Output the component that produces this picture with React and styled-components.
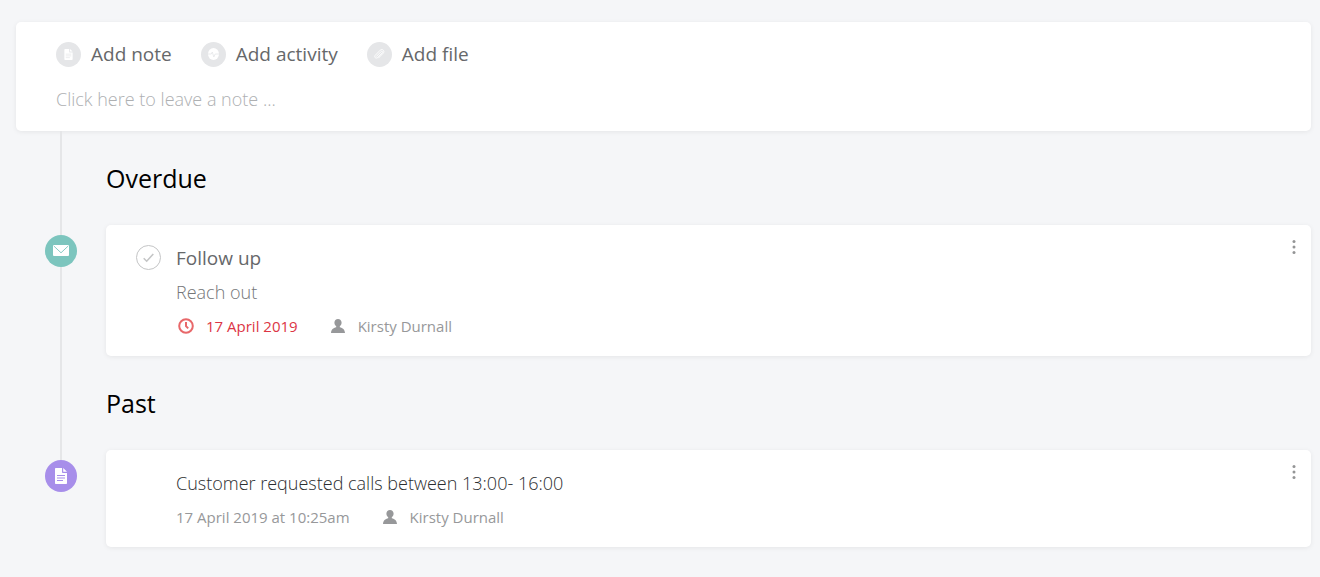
import React from 'react';
import styled, { createGlobalStyle } from 'styled-components';

const GlobalStyle = createGlobalStyle`
    * {
        box-sizing: border-box;
    }
    body {
        margin: 0;
        background-color: #f5f6f8;
        font-family: "Open Sans", "Noto Sans", sans-serif;
        color: #5c5e60;
    }
    button, input {
        font-family: inherit;
        color: inherit;
    }
    svg {
        display: block;
    }
`;

const Page = styled.main`
    padding: 22px 9px 30px 16px;
`;

const Card = styled.div`
    background-color: #fff;
    border-radius: 5px;
    box-shadow: 0 1px 5px rgba(0, 0, 0, 0.07);
`;

const Composer = styled(Card)`
    padding: 18px 40px;
`;

const Actions = styled.div`
    display: flex;
    gap: 29px;
`;

const Action = styled.button`
    display: flex;
    align-items: center;
    gap: 10px;
    padding: 0;
    border: 0;
    background: none;
    font-size: 19px;
    line-height: 28px;
    color: #66686a;
    cursor: pointer;
`;

const ActionIcon = styled.span`
    display: flex;
    align-items: center;
    justify-content: center;
    width: 25px;
    height: 25px;
    border-radius: 50%;
    background-color: #e5e6e8;
    color: #fff;
`;

const NoteInput = styled.input`
    display: block;
    width: 100%;
    height: 28px;
    margin-top: 17px;
    padding: 0;
    border: 0;
    outline: 0;
    background: none;
    font-size: 18px;
    font-weight: 300;

    &::placeholder {
        color: #aeb0b2;
        opacity: 1;
    }
`;

const Row = styled.div`
    display: grid;
    grid-template-columns: 90px 1fr;
`;

const Rail = styled.div`
    display: flex;
    flex-direction: column;
    align-items: center;
`;

const Line = styled.div`
    width: 2px;
    height: ${props => props.$short ? '10px' : 'auto'};
    flex: ${props => props.$short ? 'none' : '1'};
    background-color: #e5e6e8;
`;

const Badge = styled.div`
    display: flex;
    align-items: center;
    justify-content: center;
    width: 32px;
    height: 32px;
    border-radius: 50%;
    background-color: ${props => props.$color};
    color: #fff;
`;

const Heading = styled.h2`
    margin: 0;
    padding: 30px 0;
    font-size: 25px;
    line-height: 34px;
    font-weight: 400;
    color: #000;
`;

const EntryCard = styled(Card)`
    display: grid;
    grid-template-columns: 40px 1fr auto;
    padding: 18px 10px 15px 30px;
`;

const Check = styled.button`
    display: flex;
    align-items: center;
    justify-content: center;
    width: 25px;
    height: 25px;
    margin-top: 2px;
    padding: 0;
    border: 1px solid #c4c5c6;
    border-radius: 50%;
    background: none;
    color: #c4c5c6;
    cursor: pointer;
`;

const EntryBody = styled.div`
    grid-column: 2;
`;

const Title = styled.h3`
    margin: 0;
    font-size: 19px;
    line-height: 30px;
    font-weight: 400;
    color: #66686a;
`;

const Text = styled.p`
    margin: 4px 0 0;
    font-size: 18px;
    line-height: 30px;
    font-weight: 300;
    color: #747678;
`;

const NoteText = styled(Text)`
    margin: 0;
    color: #2c2e30;
`;

const Meta = styled.div`
    display: flex;
    gap: 30px;
    margin-top: 4px;
    font-size: 15px;
    line-height: 30px;
    color: #97989a;
`;

const MetaItem = styled.span`
    display: flex;
    align-items: center;
    gap: 10px;
    color: ${props => props.$late ? '#dc3545' : 'inherit'};
`;

const MetaIcon = styled.span`
    display: flex;
    justify-content: center;
    width: 20px;
    color: ${props => props.$late ? '#e8686a' : 'inherit'};
`;

const MenuButton = styled.button`
    align-self: start;
    margin-top: -4px;
    padding: 0;
    border: 0;
    background: none;
    color: #949596;
    cursor: pointer;
`;

const NoteIcon = ({ width, height, line }) => (
    <svg width={width} height={height} viewBox="0 0 12 16">
        <path fill="currentColor" d="M1 0h6v4.2c0 .5.4.8.8.8H12v10c0 .6-.4 1-1 1H1c-.6 0-1-.4-1-1V1c0-.6.4-1 1-1zm7.2 0L12 3.8H8.2z" />
        <path stroke={line} d="M2 7.5h8M2 10h8M2 12.5h6" />
    </svg>
);

const ActivityIcon = () => (
    <svg width="11" height="12" viewBox="0 0 11 12">
        <ellipse cx="5.5" cy="6" rx="5.5" ry="6" fill="currentColor" />
        <path fill="none" stroke="#e5e6e8" strokeWidth="0.8" d="M0 6h3.3l1-2 1.500 5L7.200 6H11" />
    </svg>
);

const ClipIcon = () => (
    <svg width="12" height="12" viewBox="0 0 12 12" fill="none" stroke="currentColor" strokeLinecap="round">
        <path strokeWidth="0.9" d="M3.5 8.3l4.7-4.8c.8-.8 2 .4 1.2 1.2L4.6 9.6C3 11.1.7 9 2.2 7.3L7.2 2.2C9.2.2 12.2 3 10.3 5.1L5.6 9.9" />
    </svg>
);

const MailIcon = () => (
    <svg width="16" height="12" viewBox="0 0 16 12">
        <rect width="16" height="11" rx="1" fill="currentColor" />
        <path fill="none" stroke="#7cc5be" strokeWidth="0.9" d="M.8 1L8 7.8 15.2 1" />
    </svg>
);

const CheckIcon = () => (
    <svg width="11" height="10" viewBox="0 0 11 10" fill="none" stroke="currentColor" strokeWidth="1.6">
        <path d="M.7 5.2l3 3L10.3 1" />
    </svg>
);

const ClockIcon = () => (
    <svg width="16" height="16" viewBox="0 0 16 16" fill="none" stroke="currentColor" strokeWidth="2">
        <circle cx="8" cy="8" r="6.8" />
        <path d="M8 4v4.2l2.2 2.2" />
    </svg>
);

const PersonIcon = () => (
    <svg width="14" height="14" viewBox="0 0 14 14" fill="currentColor">
        <path d="M7 0c2.100 0 3.600 1.500 3.600 3.600 0 1.600-.7 2.900-1.800 3.600v1c2.900.7 5 2 5.200 5.800H0c.2-3.800 2.300-5.100 5.200-5.800v-1C4.100 6.500 3.400 5.200 3.400 3.600 3.400 1.500 4.900 0 7 0z" />
    </svg>
);

function Menu() {
    return (
        <MenuButton type="button" aria-label="More options">
            <svg width="14" height="16" viewBox="0 0 14 16" fill="currentColor">
                <circle cx="7" cy="2.5" r="1.5" />
                <circle cx="7" cy="8" r="1.5" />
                <circle cx="7" cy="13.5" r="1.5" />
            </svg>
        </MenuButton>
    );
}

function Person({ name }) {
    return (
        <MetaItem>
            <MetaIcon><PersonIcon /></MetaIcon>
            {name}
        </MetaItem>
    );
}

function SectionHeading({ children }) {
    return (
        <Row>
            <Rail><Line /></Rail>
            <Heading>{children}</Heading>
        </Row>
    );
}

function Entry({ icon, color, last, children }) {
    return (
        <Row>
            <Rail>
                <Line $short />
                <Badge $color={color}>{icon}</Badge>
                {!last && <Line />}
            </Rail>
            <EntryCard as="article">{children}</EntryCard>
        </Row>
    );
}

function App() {
    return (
        <Page>
            <GlobalStyle />
            <Composer>
                <Actions>
                    <Action type="button">
                        <ActionIcon><NoteIcon width={9} height={11} line="#e5e6e8" /></ActionIcon>
                        Add note
                    </Action>
                    <Action type="button">
                        <ActionIcon><ActivityIcon /></ActionIcon>
                        Add activity
                    </Action>
                    <Action type="button">
                        <ActionIcon><ClipIcon /></ActionIcon>
                        Add file
                    </Action>
                </Actions>
                <NoteInput type="text" aria-label="Note" placeholder="Click here to leave a note ..." />
            </Composer>

            <SectionHeading>Overdue</SectionHeading>
            <Entry icon={<MailIcon />} color="#7cc5be">
                <Check type="button" aria-label="Mark as done"><CheckIcon /></Check>
                <EntryBody>
                    <Title>Follow up</Title>
                    <Text>Reach out</Text>
                    <Meta>
                        <MetaItem $late>
                            <MetaIcon $late><ClockIcon /></MetaIcon>
                            17 April 2019
                        </MetaItem>
                        <Person name="Kirsty Durnall" />
                    </Meta>
                </EntryBody>
                <Menu />
            </Entry>

            <SectionHeading>Past</SectionHeading>
            <Entry icon={<NoteIcon width={12} height={16} line="#a78eea" />} color="#a78eea" last>
                <EntryBody>
                    <NoteText>Customer requested calls between 13:00- 16:00</NoteText>
                    <Meta>
                        <span>17 April 2019 at 10:25am</span>
                        <Person name="Kirsty Durnall" />
                    </Meta>
                </EntryBody>
                <Menu />
            </Entry>
        </Page>
    );
}

export default App;
